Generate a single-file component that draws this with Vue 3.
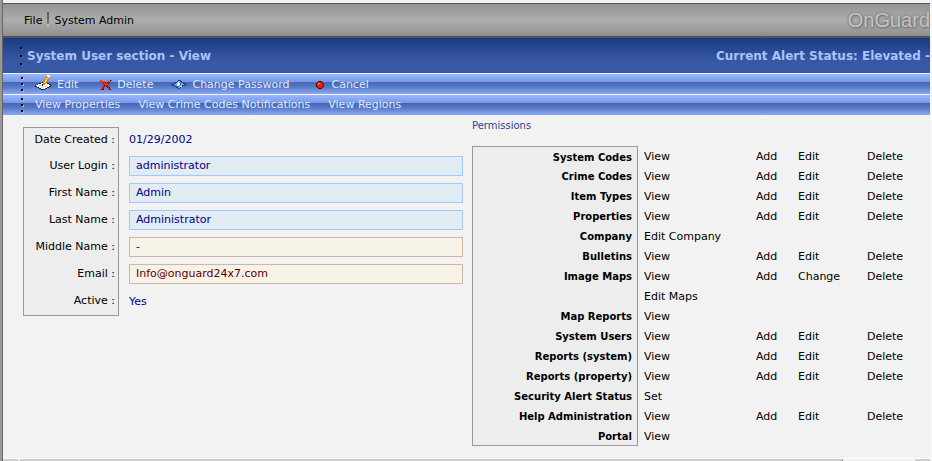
<script setup>
import { ref } from 'vue'

const user = ref({
    login: 'administrator',
    firstName: 'Admin',
    lastName: 'Administrator',
    middleName: '-',
    email: 'Info@onguard24x7.com',
})

const fields = [
    { key: 'login', label: 'User Login', required: true },
    { key: 'firstName', label: 'First Name', required: true },
    { key: 'lastName', label: 'Last Name', required: true },
    { key: 'middleName', label: 'Middle Name', required: false },
    { key: 'email', label: 'Email', required: false },
]

const permissions = [
    ['System Codes', 'View', 'Add', 'Edit', 'Delete'],
    ['Crime Codes', 'View', 'Add', 'Edit', 'Delete'],
    ['Item Types', 'View', 'Add', 'Edit', 'Delete'],
    ['Properties', 'View', 'Add', 'Edit', 'Delete'],
    ['Company', 'Edit Company', '', '', ''],
    ['Bulletins', 'View', 'Add', 'Edit', 'Delete'],
    ['Image Maps', 'View', 'Add', 'Change', 'Delete'],
    ['', 'Edit Maps', '', '', ''],
    ['Map Reports', 'View', '', '', ''],
    ['System Users', 'View', 'Add', 'Edit', 'Delete'],
    ['Reports (system)', 'View', 'Add', 'Edit', 'Delete'],
    ['Reports (property)', 'View', 'Add', 'Edit', 'Delete'],
    ['Security Alert Status', 'Set', '', '', ''],
    ['Help Administration', 'View', 'Add', 'Edit', 'Delete'],
    ['Portal', 'View', '', '', ''],
]
</script>

<template>
    <div class="page">
        <div class="window">
            <nav class="menu">
                <a href="#" class="menu-link">File</a>
                <span class="menu-divider"></span>
                <a href="#" class="menu-link">System Admin</a>
                <span class="brand">OnGuard</span>
            </nav>

            <header class="banner">
                <span class="grip grip-tall"><i></i><i></i><i></i></span>
                <h1 class="title">System User section - View</h1>
                <p class="alert-status">Current Alert Status: Elevated -</p>
            </header>

            <div class="bar">
                <span class="grip"><i></i><i></i><i></i></span>
                <button type="button" class="tool tool-edit">
                    <svg width="17" height="17" viewBox="0 0 17 17" shape-rendering="crispEdges">
                        <path d="M0 10h2V9h2V8h3V7h5v1h2v1h2v3h-2v1h-2v1h-2v1H6v-1H4v-1H2v-1H0z" fill="#222" />
                        <path d="M1 10h2V9h3V8h6v1h2v1h1v1h-1v1h-2v1h-2v1H6v-1H4v-1H2v-1H1z" fill="#fff" />
                        <path d="M4 10h2v1H4zM9 11h3v1H9zM6 12h2v1H6z" fill="#c8ccd8" />
                        <path d="M7 9h1V6h1V4h1V3h1V1h4v2h-1v2h-1v2h-1v1h-1v1h-1v1H7z" fill="#e87808" />
                        <path d="M9 7h1V5h1V3h2v1h-1v2h-1v2H9z" fill="#ffe050" />
                        <path d="M12 0h3v2h-1v1h-1V2h-1z" fill="#fff" />
                        <path d="M7 9h1v2H7z" fill="#222" />
                    </svg>
                    Edit
                </button>
                <button type="button" class="tool tool-delete">
                    <svg width="12" height="12" viewBox="0 0 12 12" shape-rendering="crispEdges">
                        <path d="M0 1h3v1h2v1h1v1h1V3h1V2h2V1h2v1h-1v1h-1v1H9v1H8v2h1v1h1v2h1v1H9v-1H8V9H7V8H6V7H5v1H4v3H1V9h1V7h1V6h1V5H3V4H2V3H0z" fill="#681010" />
                        <path d="M0 1h3v1h2v2h3V3h1V2h2V1h1v1h-1v1H9v1H8v1H7v2h1v1h1v2H8V8H7V7H5V6H4v2H3v2H1V9h1V7h1V6h1V4H2V3H0z" fill="#f02808" />
                        <path d="M4 4h4v2H4z" fill="#f02808" />
                        <path d="M1 1h2v1H1zM3 2h1v1H3zM9 2h1v1H9z" fill="#ff6840" />
                    </svg>
                    Delete
                </button>
                <button type="button" class="tool tool-password">
                    <svg width="16" height="10" viewBox="0 0 16 10" shape-rendering="crispEdges">
                        <path d="M0 4h2V3h2V2h2V1h1V0h3v1h1v1h2v1h2v1h1v1h-2v1h-2v1h-2v1h-1v1H7V8H5V7H3V6H1V5H0z" fill="#1d458e" />
                        <path d="M3 4h2V3h1V2h1V1h2v1h1v1h2v1h1v1h-2v1h-1v1H9v1H7V7H5V6H4V5H3z" fill="#7ea4e6" />
                        <path d="M6 3h1V2h1v1h1v2H8v1H6zM9 6h2v1H9z" fill="#e0f0ff" />
                        <path d="M9 3h1v2H9zM5 6h3v1H5z" fill="#2c5aa8" />
                    </svg>
                    Change Password
                </button>
                <button type="button" class="tool tool-cancel">
                    <svg width="8" height="8" viewBox="0 0 8 8" shape-rendering="crispEdges">
                        <path d="M2 0h4v1h1v1h1v4H7v1H6v1H2V7H1V6H0V2h1V1h1z" fill="#500808" />
                        <path d="M2 1h4v1h1v4H6v1H2V6H1V2h1z" fill="#f01800" />
                        <path d="M2 2h2v1H3v1H2z" fill="#ff8850" />
                    </svg>
                    Cancel
                </button>
            </div>

            <nav class="bar bar-views">
                <span class="grip"><i></i><i></i><i></i></span>
                <a href="#" class="view-link">View Properties</a>
                <a href="#" class="view-link">View Crime Codes Notifications</a>
                <a href="#" class="view-link">View Regions</a>
            </nav>

            <main class="content">
                <form class="details" @submit.prevent>
                    <table class="details-table">
                        <tbody>
                            <tr>
                                <th scope="row">Date Created :</th>
                                <td>01/29/2002</td>
                            </tr>
                            <tr v-for="field in fields" :key="field.key">
                                <th scope="row">
                                    <label :for="field.key">{{ field.label }} :</label>
                                </th>
                                <td>
                                    <input
                                        :id="field.key"
                                        v-model="user[field.key]"
                                        type="text"
                                        class="field"
                                        :class="{ required: field.required }"
                                    />
                                </td>
                            </tr>
                            <tr>
                                <th scope="row">Active :</th>
                                <td>Yes</td>
                            </tr>
                        </tbody>
                    </table>
                </form>

                <section class="permissions">
                    <h2 class="permissions-title">Permissions</h2>
                    <table class="permissions-table">
                        <tbody>
                            <tr v-for="(row, index) in permissions" :key="index">
                                <th scope="row">{{ row[0] }}</th>
                                <td class="col-view">{{ row[1] }}</td>
                                <td class="col-add">{{ row[2] }}</td>
                                <td class="col-edit">{{ row[3] }}</td>
                                <td>{{ row[4] }}</td>
                            </tr>
                        </tbody>
                    </table>
                </section>
            </main>

            <div class="scrollbar">
                <span class="scroll-arrow"></span>
                <span class="scroll-thumb"></span>
                <span class="scroll-track"></span>
                <span class="scroll-arrow"></span>
            </div>
        </div>
    </div>
</template>

<style>
body {
    background: #f2f2f2;
    overflow: hidden;
}
</style>

<style scoped>
.page {
    border-left: 2px solid #999;
    border-right: 2px solid #f6f6f6;
    font-family: Verdana, 'DejaVu Sans', sans-serif;
    font-size: 11px;
    line-height: 16px;
    color: #000;
}

.window {
    display: flex;
    flex-direction: column;
    min-height: 100vh;
    box-sizing: border-box;
    padding-top: 3px;
    border-left: 1px solid #666;
    overflow: hidden;
}

/* top menu */
.menu {
    display: flex;
    align-items: center;
    height: 35px;
    padding-left: 21px;
    border-top: 1px solid #555;
    border-bottom: 2px solid #555;
    box-sizing: border-box;
    background: linear-gradient(#949494, #adadad 50%, #999 85%, #8c8c8c);
}

.menu-link {
    padding-top: 2px;
    color: #000;
    text-decoration: none;
}

.menu-divider {
    width: 2px;
    height: 14px;
    margin: 0 5px 2px;
    background: linear-gradient(#555, #777 80%, #eee);
}

.brand {
    margin-left: auto;
    font-family: 'Liberation Sans', Arial, sans-serif;
    font-size: 20px;
    color: #c4c4c4;
    text-shadow: 0 0 3px #666, 1px 1px 2px #777;
}

/* blue title banner */
.banner {
    display: flex;
    align-items: center;
    height: 35px;
    padding-left: 17px;
    background: linear-gradient(#1b3a84, #3758a4 65%);
    color: #a8c4ff;
    white-space: nowrap;
}

.title,
.alert-status {
    margin: 0;
    font-size: 12px;
    font-weight: bold;
}

.alert-status {
    margin-left: auto;
}

.grip {
    display: flex;
    flex-direction: column;
    gap: 4px;
    margin-right: 10px;
}

.grip i {
    width: 2px;
    height: 2px;
    background: #000;
    box-shadow: 1px 1px #9db8f0;
}

.grip-tall {
    gap: 6px;
    margin-right: 5px;
}

.grip-tall i {
    box-shadow: 1px 1px #4565b0;
}

/* toolbars */
.bar {
    display: flex;
    align-items: center;
    height: 20px;
    padding-left: 18px;
    border-top: 1px solid #f2f2f2;
    background: linear-gradient(#9ab8ff, #7898e4 40%, #4868b4 42%, #5274c4 60%, #8caaf4);
}

.tool {
    display: flex;
    align-items: center;
    padding: 2px 0 0;
    border: 0;
    background: none;
    font: inherit;
    color: #dceaff;
    white-space: nowrap;
}

.tool-edit {
    gap: 5px;
    margin-right: 22px;
    margin-left: 2px;
}

.tool-edit svg {
    margin-top: -4px;
}

.tool-delete {
    gap: 5px;
    margin-right: 18px;
}

.tool-password {
    gap: 5px;
    margin-right: 27px;
}

.tool-cancel {
    gap: 7px;
}

.bar-views {
    gap: 18px;
}

.bar-views .grip {
    margin-right: -6px;
}

.view-link {
    color: #dceaff;
    text-decoration: none;
    white-space: nowrap;
}

/* content */
.content {
    display: grid;
    grid-template-columns: 1fr 458px;
    gap: 9px;
    flex: 1;
    padding-left: 20px;
}

.details {
    padding-top: 12px;
}

.details-table {
    width: 100%;
    border-spacing: 0;
}

.details-table th {
    width: 96px;
    height: 27px;
    padding: 0 3px 0 0;
    box-sizing: border-box;
    border: 0 solid #999;
    border-width: 0 1px;
    background: #ededed;
    font-weight: normal;
    text-align: right;
    white-space: nowrap;
}

.details-table tr:first-child th {
    height: 25px;
    border-top-width: 1px;
}

.details-table tr:last-child th {
    height: 29px;
    border-bottom-width: 1px;
}

.details-table td {
    padding: 0 0 0 10px;
    color: #00008b;
}

.field {
    display: block;
    width: 100%;
    height: 20px;
    box-sizing: border-box;
    padding: 0 6px;
    border: 1px solid #d0b8a0;
    border-radius: 0;
    background: #f7f2e8;
    font: inherit;
    color: #5c0000;
}

.field.required {
    border-color: #a4c8ff;
    background: #e0ebf2;
    color: #00008b;
}

.permissions-title {
    margin: 3px 0 12px;
    font-size: 10px;
    font-weight: normal;
    color: #2c4490;
}

.permissions-table {
    width: 100%;
    border-spacing: 0;
    table-layout: fixed;
}

.permissions-table th,
.permissions-table td {
    height: 20px;
    padding: 1px 0 0 6px;
    box-sizing: border-box;
    text-align: left;
    white-space: nowrap;
}

.permissions-table th {
    width: 166px;
    padding: 2px 5px 0 0;
    border: 0 solid #999;
    border-width: 0 1px;
    background: #ededed;
    font-size: 10px;
    text-align: right;
}

.permissions-table tr:first-child th {
    border-top-width: 1px;
}

.permissions-table tr:last-child th {
    border-bottom-width: 1px;
}

.col-view {
    width: 112px;
}

.col-add {
    width: 42px;
}

.col-edit {
    width: 69px;
}

/* bottom edge scrollbar */
.scrollbar {
    display: flex;
    gap: 2px;
    height: 3px;
    box-sizing: border-box;
    border-top: 1px solid #fff;
    background: #f4f4f4;
}

.scroll-arrow {
    width: 15px;
    background: #ccc;
}

.scroll-thumb {
    flex: 12;
    background: #ccc;
    border-right: 1px solid #999;
}

.scroll-track {
    flex: 1;
    background: #eee;
}
</style>
